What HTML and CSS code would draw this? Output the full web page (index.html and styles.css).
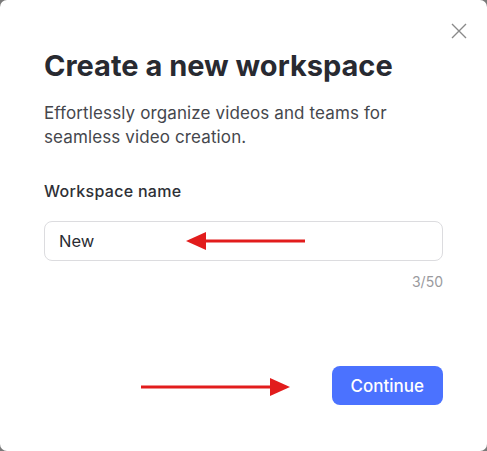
FILE: index.html
```html
<!DOCTYPE html>
<html lang="en">
<head>
  <meta charset="UTF-8" />
  <meta name="viewport" content="width=device-width, initial-scale=1.0"/>
  <title>Create a new workspace</title>
  <link rel="stylesheet" href="styles.css">
</head>
<body>

  <div class="modal">
    <button class="close-btn" aria-label="Close">
      <svg width="16" height="16" viewBox="0 0 16 16">
        <path d="M1 1 L15 15 M15 1 L1 15" stroke="#8a8a8a" stroke-width="1.4" fill="none"/>
      </svg>
    </button>

    <h2>Create a new workspace</h2>
    <p class="subtitle">Effortlessly organize videos and teams for seamless video creation.</p>

    <label for="wsName">Workspace name</label>
    <div class="field">
      <input type="text" id="wsName" value="New" maxlength="50" />
      <!-- annotation arrow pointing at the input value -->
      <svg class="arrow arrow-left" width="120" height="20" viewBox="0 0 120 20">
        <line x1="18" y1="10" x2="119" y2="10" stroke="#e21c1c" stroke-width="3"/>
        <polygon points="0,10 20,1 20,19" fill="#e21c1c"/>
      </svg>
    </div>
    <div class="counter" id="counter">3/50</div>

    <div class="footer">
      <!-- annotation arrow pointing at the button -->
      <svg class="arrow arrow-right" width="150" height="20" viewBox="0 0 150 20">
        <line x1="0" y1="10" x2="132" y2="10" stroke="#e21c1c" stroke-width="3"/>
        <polygon points="149,10 129,1 129,19" fill="#e21c1c"/>
      </svg>
      <button class="btn">Continue</button>
    </div>
  </div>

  <script>
    const nameInput = document.getElementById("wsName");
    const counter = document.getElementById("counter");

    nameInput.addEventListener("input", () => {
      counter.innerText = `${nameInput.value.length}/50`;
    });
  </script>

</body>
</html>
```

FILE: styles.css
```css
body {
  margin: 0;
  font-family: 'Inter', sans-serif;
  background: #7a7a7a;
}

.modal {
  position: relative;
  box-sizing: border-box;
  width: 487px;
  height: 451px;
  background: #ffffff;
  border-radius: 7px;
  padding: 48px 44px 0 44px;
}

.close-btn {
  position: absolute;
  top: 23px;
  right: 20px;
  padding: 0;
  border: none;
  background: none;
  cursor: pointer;
  line-height: 0;
}

h2 {
  margin: 0;
  font-size: 29px;
  font-weight: 700;
  letter-spacing: 0;
  color: #282a31;
  line-height: 36px;
}

.subtitle {
  margin: 17px 0 0;
  font-size: 17px;
  letter-spacing: 0.12px;
  line-height: 24px;
  color: #45474d;
}

label {
  display: block;
  margin: 32px 0 0;
  font-size: 16px;
  letter-spacing: 0.3px;
  font-weight: 500;
  color: #2e3036;
  line-height: 20px;
}

.field {
  position: relative;
  margin-top: 20px;
}

input {
  width: 100%;
  box-sizing: border-box;
  height: 40px;
  padding: 0 14px;
  border: 1px solid #dcdcdf;
  border-radius: 8px;
  font-family: 'Inter', sans-serif;
  font-size: 16.5px;
  color: #2a2c33;
  outline: none;
}

.counter {
  margin-top: 13px;
  text-align: right;
  font-size: 14px;
  color: #9a9a9e;
  line-height: 16px;
}

.footer {
  position: relative;
  display: flex;
  justify-content: flex-end;
  margin-top: 76px;
}

.btn {
  height: 39px;
  padding: 0 19px;
  background: #4b72ff;
  color: #ffffff;
  border: none;
  border-radius: 8px;
  font-family: 'Inter', sans-serif;
  font-size: 17px;
  font-weight: 500;
  cursor: pointer;
}

.btn:hover {
  background: #3c62ee;
}

.arrow {
  position: absolute;
}

.arrow-left {
  left: 142px;
  top: 10px;
}

.arrow-right {
  left: 97px;
  top: 11px;
}
```
